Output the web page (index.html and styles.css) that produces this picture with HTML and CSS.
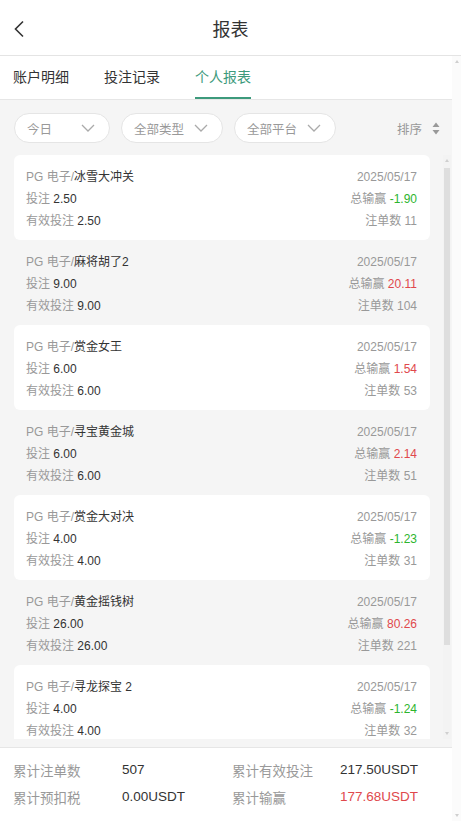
FILE: index.html
```html
<!DOCTYPE html>
<html lang="zh">
<head>
<meta charset="utf-8">
<title>报表</title>
<link rel="stylesheet" href="styles.css">
</head>
<body>
<div class="app">
  <header class="topbar">
    <svg class="back" width="12" height="18" viewBox="0 0 12 18"><path d="M10 1.5 L2.5 9 L10 16.5" fill="none" stroke="#333" stroke-width="1.6"/></svg>
    <h1 class="title">报表</h1>
  </header>
  <div class="main">
    <div class="content">
      <nav class="tabs">
        <span class="tab">账户明细</span>
        <span class="tab">投注记录</span>
        <span class="tab active">个人报表</span>
      </nav>
      <div class="filters">
        <div class="pill pill-wide"><span>今日</span><svg class="chev" width="14" height="8" viewBox="0 0 14 8"><path d="M1 1 L7 7 L13 1" fill="none" stroke="#aaa" stroke-width="1.3"/></svg></div>
        <div class="pill"><span>全部类型</span><svg class="chev" width="14" height="8" viewBox="0 0 14 8"><path d="M1 1 L7 7 L13 1" fill="none" stroke="#aaa" stroke-width="1.3"/></svg></div>
        <div class="pill"><span>全部平台</span><svg class="chev" width="14" height="8" viewBox="0 0 14 8"><path d="M1 1 L7 7 L13 1" fill="none" stroke="#aaa" stroke-width="1.3"/></svg></div>
        <div class="sort"><span>排序</span><svg width="8" height="13" viewBox="0 0 8 13"><path d="M4 0.5 L7.5 5 L0.5 5 Z M4 12.5 L7.5 8 L0.5 8 Z" fill="#999"/></svg></div>
      </div>
      <div class="list-wrap">
        <div class="list">
          <div class="card">
            <div class="row"><span><span class="muted">PG 电子/</span><span class="dark">冰雪大冲关</span></span><span class="muted">2025/05/17</span></div>
            <div class="row"><span><span class="muted">投注</span> <span class="dark">2.50</span></span><span><span class="muted">总输赢</span> <span class="win">-1.90</span></span></div>
            <div class="row"><span><span class="muted">有效投注</span> <span class="dark">2.50</span></span><span class="muted">注单数 11</span></div>
          </div>
          <div class="card">
            <div class="row"><span><span class="muted">PG 电子/</span><span class="dark">麻将胡了2</span></span><span class="muted">2025/05/17</span></div>
            <div class="row"><span><span class="muted">投注</span> <span class="dark">9.00</span></span><span><span class="muted">总输赢</span> <span class="loss">20.11</span></span></div>
            <div class="row"><span><span class="muted">有效投注</span> <span class="dark">9.00</span></span><span class="muted">注单数 104</span></div>
          </div>
          <div class="card">
            <div class="row"><span><span class="muted">PG 电子/</span><span class="dark">赏金女王</span></span><span class="muted">2025/05/17</span></div>
            <div class="row"><span><span class="muted">投注</span> <span class="dark">6.00</span></span><span><span class="muted">总输赢</span> <span class="loss">1.54</span></span></div>
            <div class="row"><span><span class="muted">有效投注</span> <span class="dark">6.00</span></span><span class="muted">注单数 53</span></div>
          </div>
          <div class="card">
            <div class="row"><span><span class="muted">PG 电子/</span><span class="dark">寻宝黄金城</span></span><span class="muted">2025/05/17</span></div>
            <div class="row"><span><span class="muted">投注</span> <span class="dark">6.00</span></span><span><span class="muted">总输赢</span> <span class="loss">2.14</span></span></div>
            <div class="row"><span><span class="muted">有效投注</span> <span class="dark">6.00</span></span><span class="muted">注单数 51</span></div>
          </div>
          <div class="card">
            <div class="row"><span><span class="muted">PG 电子/</span><span class="dark">赏金大对决</span></span><span class="muted">2025/05/17</span></div>
            <div class="row"><span><span class="muted">投注</span> <span class="dark">4.00</span></span><span><span class="muted">总输赢</span> <span class="win">-1.23</span></span></div>
            <div class="row"><span><span class="muted">有效投注</span> <span class="dark">4.00</span></span><span class="muted">注单数 31</span></div>
          </div>
          <div class="card">
            <div class="row"><span><span class="muted">PG 电子/</span><span class="dark">黄金摇钱树</span></span><span class="muted">2025/05/17</span></div>
            <div class="row"><span><span class="muted">投注</span> <span class="dark">26.00</span></span><span><span class="muted">总输赢</span> <span class="loss">80.26</span></span></div>
            <div class="row"><span><span class="muted">有效投注</span> <span class="dark">26.00</span></span><span class="muted">注单数 221</span></div>
          </div>
          <div class="card">
            <div class="row"><span><span class="muted">PG 电子/</span><span class="dark">寻龙探宝 2</span></span><span class="muted">2025/05/17</span></div>
            <div class="row"><span><span class="muted">投注</span> <span class="dark">4.00</span></span><span><span class="muted">总输赢</span> <span class="win">-1.24</span></span></div>
            <div class="row"><span><span class="muted">有效投注</span> <span class="dark">4.00</span></span><span class="muted">注单数 32</span></div>
          </div>
        </div>
        <div class="vscroll" aria-hidden="true">
          <span class="arrow-up"></span>
          <span class="thumb"></span>
          <span class="arrow-down"></span>
        </div>
      </div>
      <footer class="summary">
        <span class="s-label">累计注单数</span><span class="s-val">507</span>
        <span class="s-label">累计有效投注</span><span class="s-val">217.50USDT</span>
        <span class="s-label">累计预扣税</span><span class="s-val">0.00USDT</span>
        <span class="s-label">累计输赢</span><span class="s-val loss">177.68USDT</span>
      </footer>
    </div>
    <div class="outer-scroll" aria-hidden="true">
      <span class="arrow-up"></span>
      <span class="arrow-down"></span>
    </div>
  </div>
</div>
</body>
</html>
```
FILE: styles.css
```css
* { box-sizing: border-box; }
html, body { margin: 0; padding: 0; }
body {
  font-family: "Liberation Sans", "Noto Sans CJK SC", sans-serif;
  color: #333;
  background: #fff;
}
.app {
  width: 461px;
  height: 821px;
  display: flex;
  flex-direction: column;
  overflow: hidden;
}
.topbar {
  height: 56px;
  flex: none;
  border-bottom: 1px solid #e4e4e4;
  display: flex;
  align-items: center;
  justify-content: center;
  position: relative;
  background: #fff;
}
.back {
  position: absolute;
  left: 13px;
  top: 20px;
}
.title {
  margin: 0;
  font-size: 18px;
  font-weight: normal;
  color: #333;
  line-height: 1;
  padding-top: 4px;
}
.main {
  flex: 1;
  min-height: 0;
  display: flex;
}
.content {
  flex: 1;
  min-width: 0;
  display: flex;
  flex-direction: column;
  background: #f5f5f5;
}
.outer-scroll {
  width: 9px;
  flex: none;
  background: #fbfbfb;
  display: flex;
  flex-direction: column;
  justify-content: space-between;
  align-items: center;
  padding: 4px 0;
}
.arrow-up, .arrow-down {
  width: 0;
  height: 0;
  border-left: 2.5px solid transparent;
  border-right: 2.5px solid transparent;
}
.arrow-up { border-bottom: 3px solid #cfcfcf; }
.arrow-down { border-top: 3px solid #cfcfcf; }
.tabs {
  flex: none;
  height: 44px;
  background: #fff;
  border-bottom: 1px solid #e6e6e6;
  display: flex;
  gap: 35px;
  padding-left: 13px;
}
.tab {
  height: 43px;
  line-height: 43px;
  font-size: 14px;
  color: #333;
  position: relative;
}
.tab.active { color: #3d9a7c; }
.tab.active::after {
  content: "";
  position: absolute;
  left: 0;
  right: 0;
  bottom: 0;
  height: 2.5px;
  background: #3d9a7c;
}
.filters {
  flex: none;
  display: flex;
  align-items: center;
  gap: 11px;
  padding: 13px 0 12px 14px;
}
.pill {
  height: 30px;
  border: 1px solid #e5e5e5;
  border-radius: 15px;
  background: #fff;
  display: flex;
  align-items: center;
  justify-content: space-between;
  gap: 10px;
  padding: 0 14px 0 12px;
  font-size: 12.5px;
  color: #999;
}
.pill-wide { width: 96px; }
.chev { display: block; }
.sort {
  margin-left: auto;
  margin-right: 12px;
  display: flex;
  align-items: center;
  gap: 10px;
  font-size: 12.5px;
  color: #999;
}
.sort svg { display: block; }
.list-wrap {
  flex: 1;
  min-height: 0;
  display: flex;
  margin-bottom: 8px;
}
.list {
  flex: 1;
  min-width: 0;
  overflow: hidden;
  padding: 0 13px 0 14px;
}
.vscroll {
  width: 8px;
  flex: none;
  margin-right: 1px;
  background: #f3f3f3;
  display: flex;
  flex-direction: column;
  align-items: center;
  padding: 4px 0;
}
.vscroll .thumb {
  width: 6px;
  height: 477px;
  margin-top: 6px;
  background: #dedede;
}
.vscroll .arrow-down { margin-top: auto; }
.card {
  height: 85px;
  padding: 11px 13px 8px 12px;
  border-radius: 6px;
  font-size: 12px;
}
.card:nth-child(odd) { background: #fff; }
.row {
  display: flex;
  justify-content: space-between;
  line-height: 22px;
  height: 22px;
}
.muted { color: #999; }
.dark { color: #333; }
.win { color: #2db52d; }
.loss { color: #e0484c; }
.summary {
  flex: none;
  background: #fff;
  border-top: 1px solid #e6e6e6;
  padding: 8px 0 11px 13px;
  display: grid;
  grid-template-columns: 109px 110px 108px auto;
  grid-auto-rows: 27px;
  align-items: center;
  font-size: 13.5px;
}
.s-label { color: #999; }
.s-val { color: #333; }
.s-val.loss { color: #e0484c; }
```
